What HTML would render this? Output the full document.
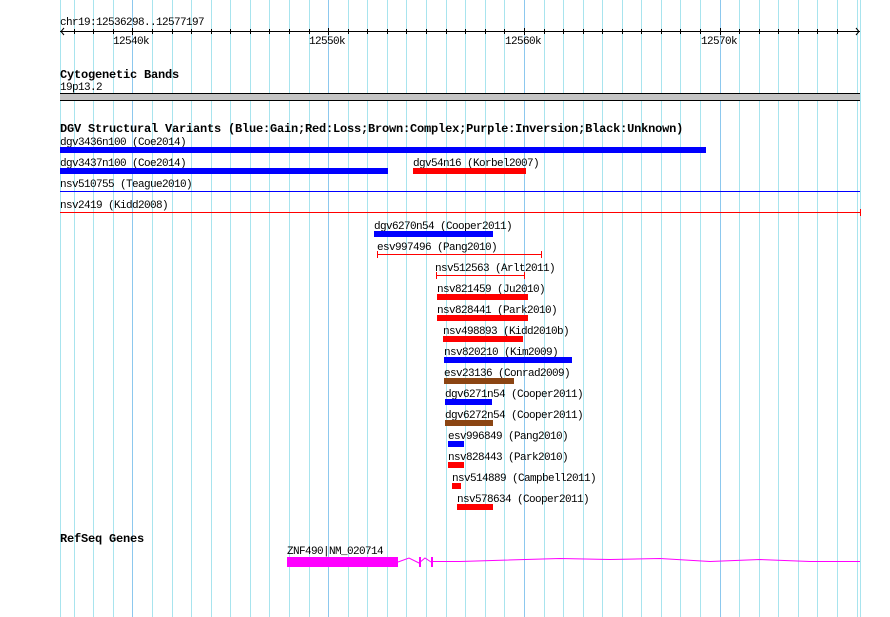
<!DOCTYPE html>
<html><head><meta charset="utf-8"><style>
html,body{margin:0;padding:0;background:#fff;width:890px;height:617px;overflow:hidden}
svg{display:block}
text{font-family:"Liberation Mono","DejaVu Sans Mono",monospace;font-size:11px;letter-spacing:-0.6px;fill:#000}
.h{font-weight:bold;font-size:12px;letter-spacing:-0.2px}
</style></head><body>
<svg width="890" height="617" xmlns="http://www.w3.org/2000/svg" shape-rendering="crispEdges">
<g stroke="#a8e4ee" stroke-width="1">
<line x1="60.5" y1="0" x2="60.5" y2="617"/><line x1="74.5" y1="0" x2="74.5" y2="617"/><line x1="93.5" y1="0" x2="93.5" y2="617"/><line x1="113.5" y1="0" x2="113.5" y2="617"/><line x1="152.5" y1="0" x2="152.5" y2="617"/><line x1="172.5" y1="0" x2="172.5" y2="617"/><line x1="191.5" y1="0" x2="191.5" y2="617"/><line x1="211.5" y1="0" x2="211.5" y2="617"/><line x1="230.5" y1="0" x2="230.5" y2="617"/><line x1="250.5" y1="0" x2="250.5" y2="617"/><line x1="269.5" y1="0" x2="269.5" y2="617"/><line x1="289.5" y1="0" x2="289.5" y2="617"/><line x1="309.5" y1="0" x2="309.5" y2="617"/><line x1="348.5" y1="0" x2="348.5" y2="617"/><line x1="367.5" y1="0" x2="367.5" y2="617"/><line x1="387.5" y1="0" x2="387.5" y2="617"/><line x1="406.5" y1="0" x2="406.5" y2="617"/><line x1="426.5" y1="0" x2="426.5" y2="617"/><line x1="446.5" y1="0" x2="446.5" y2="617"/><line x1="465.5" y1="0" x2="465.5" y2="617"/><line x1="485.5" y1="0" x2="485.5" y2="617"/><line x1="504.5" y1="0" x2="504.5" y2="617"/><line x1="544.5" y1="0" x2="544.5" y2="617"/><line x1="563.5" y1="0" x2="563.5" y2="617"/><line x1="583.5" y1="0" x2="583.5" y2="617"/><line x1="602.5" y1="0" x2="602.5" y2="617"/><line x1="622.5" y1="0" x2="622.5" y2="617"/><line x1="641.5" y1="0" x2="641.5" y2="617"/><line x1="661.5" y1="0" x2="661.5" y2="617"/><line x1="680.5" y1="0" x2="680.5" y2="617"/><line x1="700.5" y1="0" x2="700.5" y2="617"/><line x1="739.5" y1="0" x2="739.5" y2="617"/><line x1="759.5" y1="0" x2="759.5" y2="617"/><line x1="778.5" y1="0" x2="778.5" y2="617"/><line x1="798.5" y1="0" x2="798.5" y2="617"/><line x1="817.5" y1="0" x2="817.5" y2="617"/><line x1="837.5" y1="0" x2="837.5" y2="617"/><line x1="857.5" y1="0" x2="857.5" y2="617"/><line x1="860.5" y1="0" x2="860.5" y2="617"/>
</g>
<g stroke="#8cc8ee" stroke-width="1">
<line x1="132.5" y1="0" x2="132.5" y2="617"/><line x1="328.5" y1="0" x2="328.5" y2="617"/><line x1="524.5" y1="0" x2="524.5" y2="617"/><line x1="720.5" y1="0" x2="720.5" y2="617"/>
</g>
<text x="60" y="25">chr19:12536298..12577197</text>
<g stroke="#000" stroke-width="1">
<line x1="60" y1="31.5" x2="860" y2="31.5"/>
<polyline points="64,28 61,31.5 64,35" fill="none" shape-rendering="auto"/>
<polyline points="856,28 859,31.5 856,35" fill="none" shape-rendering="auto"/>
<path d="M74.5 29v5M93.5 29v5M113.5 29v5M132.5 28v7M152.5 29v5M172.5 29v5M191.5 29v5M211.5 29v5M230.5 29v5M250.5 29v5M269.5 29v5M289.5 29v5M309.5 29v5M328.5 28v7M348.5 29v5M367.5 29v5M387.5 29v5M406.5 29v5M426.5 29v5M446.5 29v5M465.5 29v5M485.5 29v5M504.5 29v5M524.5 28v7M544.5 29v5M563.5 29v5M583.5 29v5M602.5 29v5M622.5 29v5M641.5 29v5M661.5 29v5M680.5 29v5M700.5 29v5M720.5 28v7M739.5 29v5M759.5 29v5M778.5 29v5M798.5 29v5M817.5 29v5M837.5 29v5"/>
</g>
<text x="113" y="44">12540k</text><text x="309" y="44">12550k</text><text x="505" y="44">12560k</text><text x="701" y="44">12570k</text>
<text class="h" x="60" y="78">Cytogenetic Bands</text>
<text x="60" y="90">19p13.2</text>
<rect x="60" y="93" width="800" height="8" fill="#c4c4c4"/>
<rect x="60" y="93" width="800" height="1" fill="#000"/><rect x="60" y="100" width="800" height="1" fill="#000"/>
<text class="h" x="60" y="132">DGV Structural Variants (Blue:Gain;Red:Loss;Brown:Complex;Purple:Inversion;Black:Unknown)</text>
<text x="60" y="145">dgv3436n100 (Coe2014)</text><rect x="60" y="147" width="646" height="6" fill="#0000ff"/>
<text x="60" y="166">dgv3437n100 (Coe2014)</text><rect x="60" y="168" width="328" height="6" fill="#0000ff"/>
<text x="413" y="166">dgv54n16 (Korbel2007)</text><rect x="413" y="168" width="113" height="6" fill="#ff0000"/>
<text x="60" y="187">nsv510755 (Teague2010)</text><rect x="60" y="191" width="800" height="1" fill="#0000ff"/>
<text x="60" y="208">nsv2419 (Kidd2008)</text><rect x="60" y="212" width="801" height="1" fill="#ff0000"/><rect x="860" y="209" width="1" height="7" fill="#ff0000"/>
<text x="374" y="229">dgv6270n54 (Cooper2011)</text><rect x="374" y="231" width="119" height="6" fill="#0000ff"/>
<text x="377" y="250">esv997496 (Pang2010)</text><rect x="377" y="254" width="165" height="1" fill="#ff0000"/><rect x="377" y="251" width="1" height="7" fill="#ff0000"/><rect x="541" y="251" width="1" height="7" fill="#ff0000"/>
<text x="435" y="271">nsv512563 (Arlt2011)</text><rect x="436" y="275" width="89" height="1" fill="#ff0000"/><rect x="436" y="272" width="1" height="7" fill="#ff0000"/><rect x="524" y="272" width="1" height="7" fill="#ff0000"/>
<text x="437" y="292">nsv821459 (Ju2010)</text><rect x="437" y="294" width="91" height="6" fill="#ff0000"/>
<text x="437" y="313">nsv828441 (Park2010)</text><rect x="437" y="315" width="91" height="6" fill="#ff0000"/>
<text x="443" y="334">nsv498893 (Kidd2010b)</text><rect x="443" y="336" width="80" height="6" fill="#ff0000"/>
<text x="444" y="355">nsv820210 (Kim2009)</text><rect x="444" y="357" width="128" height="6" fill="#0000ff"/>
<text x="444" y="376">esv23136 (Conrad2009)</text><rect x="444" y="378" width="70" height="6" fill="#8b4513"/>
<text x="445" y="397">dgv6271n54 (Cooper2011)</text><rect x="445" y="399" width="47" height="6" fill="#0000ff"/>
<text x="445" y="418">dgv6272n54 (Cooper2011)</text><rect x="445" y="420" width="48" height="6" fill="#8b4513"/>
<text x="448" y="439">esv996849 (Pang2010)</text><rect x="448" y="441" width="16" height="6" fill="#0000ff"/>
<text x="448" y="460">nsv828443 (Park2010)</text><rect x="448" y="462" width="16" height="6" fill="#ff0000"/>
<text x="452" y="481">nsv514889 (Campbell2011)</text><rect x="452" y="483" width="9" height="6" fill="#ff0000"/>
<text x="457" y="502">nsv578634 (Cooper2011)</text><rect x="457" y="504" width="36" height="6" fill="#ff0000"/>
<text class="h" x="60" y="542">RefSeq Genes</text>
<text x="287" y="554">ZNF490|NM_020714</text>
<rect x="287" y="557" width="111" height="10" fill="#ff00ff"/>
<polyline points="398,562 409,558 419,563 425,558 431,562" fill="none" stroke="#ff00ff" shape-rendering="auto"/>
<rect x="419" y="557" width="2" height="10" fill="#ff00ff"/>
<rect x="431" y="557" width="2" height="10" fill="#ff00ff"/>
<polyline points="433,561.5 460,561.5 560,558.5 610,559.5 660,558.5 710,561.5 760,559.5 810,561.5 860,561.5" fill="none" stroke="#ff00ff" shape-rendering="auto"/>
</svg>
</body></html>
